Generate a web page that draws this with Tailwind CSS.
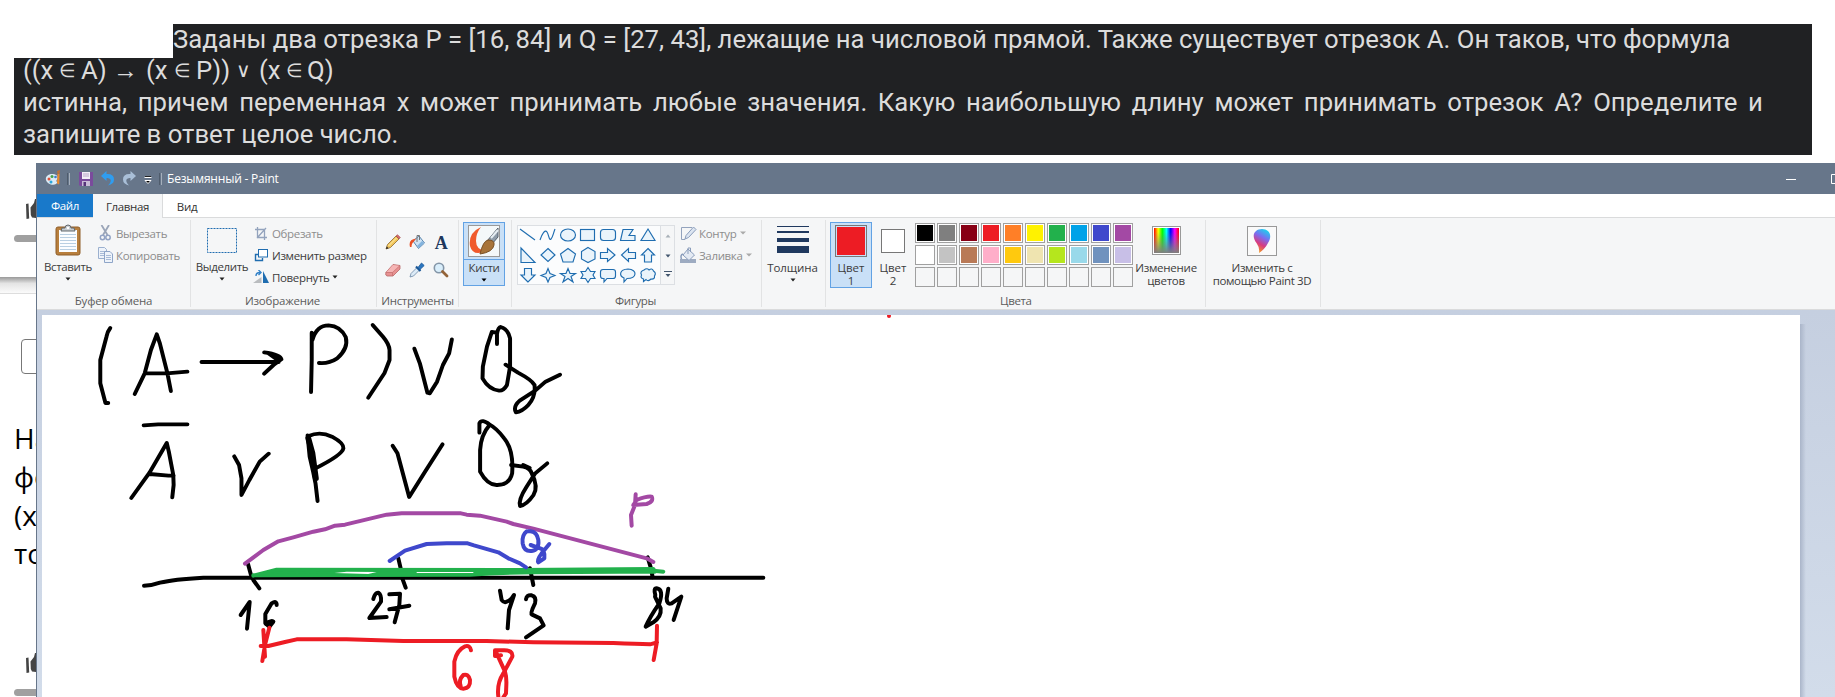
<!DOCTYPE html>
<html lang="ru">
<head>
<meta charset="utf-8">
<title>Безымянный - Paint</title>
<script src="https://cdn.jsdelivr.net/npm/@tailwindcss/browser@4"></script>
</head>
<body class="w-[1835px] h-[697px] overflow-hidden bg-white relative flex flex-col">

<!-- Task statement -->
<section class="mt-6 ml-[14px] w-[1798px] h-[131px] bg-[#202123] text-[#dcdcdc] font-['Roboto','Noto_Sans',sans-serif] text-[25.7px] leading-[31.6px] whitespace-nowrap shrink-0 relative">
  <div class="flex h-[34px]"><div class="w-[159px] h-[34px] bg-white shrink-0"></div><div class="w-[1556px] h-[32px]">Заданы два отрезка P = [16, 84] и Q = [27, 43], лежащие на числовой прямой. Также существует отрезок A. Он таков, что формула</div></div>
  <div class="ml-[9px] -mt-[3px] h-[32px] grid grid-cols-[36px_22px_32px_33px_28px_22px_40px_23px_27px_21px_auto] w-[330px]"><span>((x</span><span class="font-['DejaVu_Sans'] text-[19px]">∈</span><span>A)</span><span class="font-['Liberation_Sans'] text-[25px]">→</span><span>(x</span><span class="font-['DejaVu_Sans'] text-[19px]">∈</span><span>P))</span><span class="font-['DejaVu_Sans'] text-[20px]">∨</span><span>(x</span><span class="font-['DejaVu_Sans'] text-[19px]">∈</span><span>Q)</span></div>
  <div class="ml-[9px] w-[1740px] flex justify-between"><span>истинна,</span><span>причем</span><span>переменная</span><span>x</span><span>может</span><span>принимать</span><span>любые</span><span>значения.</span><span>Какую</span><span>наибольшую</span><span>длину</span><span>может</span><span>принимать</span><span>отрезок</span><span>A?</span><span>Определите</span><span>и</span></div>
  <div class="pl-[9px]">запишите в ответ целое число.</div>
</section>

<div class="flex mt-2 h-[534px] shrink-0">
  <!-- Page visible behind the window -->
  <aside class="w-9 h-[534px] shrink-0 overflow-hidden font-['Open_Sans','Noto_Sans',sans-serif] text-black">
    <svg class="block ml-[26px] mt-[35px]" width="10" height="22"><path d="M0 6 2.500 5.500 3.200 20.500 .500 21Z" fill="#444"/><path d="M4.500 9.500 8 5 9 1H10V20L6 19.500 4.800 17Z" fill="#444"/></svg>
    <div class="ml-[14px] mt-[15px] w-10 h-[7px] rounded-full bg-[#a0a0a0]"></div>
    <div class="mt-[35px] h-[17px] bg-linear-to-b from-[#999] via-[#e4e4e4] via-40% to-[#fbfbfb] border-b border-[#ddd]"></div>
    <div class="ml-[21px] mt-[45px] w-10 h-[35px] rounded-[4px] border border-[#777]"></div>
    <div class="ml-[14px] mt-[45px] text-[28px] leading-[38.4px] h-[153px] whitespace-nowrap"><p>На</p><p>фо</p><p>(x</p><p>то</p></div>
    <svg class="block ml-[26px] mt-[80px]" width="10" height="22"><path d="M0 6 2.500 5.500 3.200 20.500 .500 21Z" fill="#444"/><path d="M4.500 9.500 8 5 9 1H10V20L6 19.500 4.800 17Z" fill="#444"/></svg>
    <div class="ml-[14px] mt-[15px] w-10 h-[7px] rounded-full bg-[#a0a0a0]"></div>
  </aside>

  <!-- Paint window -->
  <main class="w-[1799px] h-[534px] shrink-0 overflow-hidden border-l border-[#67768a] flex flex-col font-['Open_Sans','Noto_Sans',sans-serif] text-[11.5px] leading-[13px] tracking-[-0.35px] text-[#3c3c3c] whitespace-nowrap">
    <header class="h-[31px] bg-[#67768a] flex items-center shrink-0 -ml-px pl-[9px] text-white">
      <svg width="17" height="17" viewBox="0 0 17 17"><path d="M1 10C0 6 4 3.500 8 4S14 7 12 9.500 14 12 11 14 2 14 1 10Z" fill="#dcebf5"/><circle cx="4" cy="9" r="1.500" fill="#e0523c"/><circle cx="7" cy="6.500" r="1.500" fill="#4aa34a"/><circle cx="10.500" cy="7" r="1.300" fill="#3b7bd0"/><circle cx="6" cy="12" r="1.500" fill="#28a7dd"/><path d="M12.500 4 14.500 4 14.200 14Q13 15 12 13Z" fill="#e98a2c"/><path d="M12 1 15 0 14.500 4H12.500Z" fill="#b9703a"/></svg>
      <div class="w-[3px] h-3 ml-[5px] border-l border-r border-l-[#4f5c6c] border-r-[#a5afbb]"></div>
      <svg class="ml-[9px]" width="14" height="14"><path d="M0 0H14V14H1L0 13Z" fill="#7a4b9c"/><path d="M3 0H11V7H3Z" fill="#f3eef7"/><path d="M4 2H10M4 4H10" stroke="#b8a5c8"/><path d="M3 9H11V14H3Z" fill="#c9bcd6"/><path d="M4.500 10H7V14H4.500Z" fill="#56347a"/></svg>
      <svg class="ml-[8px]" width="14" height="15"><path d="M0 5 5.500 0V3Q13 2.500 13 8.500 13 13 7 14.500 10.500 11 9.500 8.500 8.500 6.700 5.500 7V10Z" fill="#2f9df0"/></svg>
      <svg class="ml-[7px]" width="14" height="15"><path d="M14 5 8.500 0V3Q1 2.500 1 8.500 1 13 7 14.500 3.500 11 4.500 8.500 5.500 6.700 8.500 7V10Z" fill="#a9bfd8"/></svg>
      <svg class="ml-[8px] mt-[3px]" width="8" height="8"><path d="M.500 1.500H7.500M1 4.500H7L4 7.500Z" stroke="#fff" fill="#000"/><path d="M1 .5H7" stroke="#222"/></svg>
      <div class="w-[3px] h-3 ml-[7px] border-l border-r border-l-[#4f5c6c] border-r-[#a5afbb]"></div>
      <span class="ml-[5px] text-[12px] tracking-[-0.2px]">Безымянный - Paint</span>
      <svg class="ml-auto" width="50" height="12"><path d="M1 6.500H11" stroke="#fff"/><path d="M55 1.500H46.500V10.500H55" fill="none" stroke="#fff"/></svg>
    </header>

    <nav class="h-6 flex shrink-0 border-b border-[#dadbdc] text-[#333]">
      <div class="w-14 h-[23px] bg-[#1979ca] text-white flex items-center justify-center">Файл</div>
      <div class="w-[70px] h-6 bg-[#f5f6f7] border-r border-[#dadbdc] flex items-center justify-center">Главная</div>
      <div class="w-12 h-6 flex items-center justify-center">Вид</div>
    </nav>

    <div class="h-[92px] bg-[#f5f6f7] flex shrink-0 pt-[2px] border-b border-[#dadbdc]">
      <!-- Clipboard -->
      <section class="w-[154px] h-[87px] border-r border-[#e2e3e4] flex flex-col shrink-0">
        <div class="h-[74px] flex">
          <div class="w-[60px] pl-[2px] flex flex-col items-center pt-[4px]">
            <svg width="26" height="32" viewBox="0 0 26 32"><rect x="1" y="3" width="24" height="28" rx="2" fill="#b87f3d" stroke="#8f5f2a"/><path d="M4 6H22V28H4Z" fill="#fbfdff"/><path d="M5 10.500H21M5 13.500H21M5 16.500H21M5 19.500H21M5 22.500H21M5 25.500H21" stroke="#b9cfe2"/><path d="M6 7 7 4H10Q10 1 13 1T16 4H19L20 7Z" fill="#c5cbd0" stroke="#63686d"/><circle cx="13" cy="4" r="1.300" fill="#fff"/></svg>
            <span class="mt-[4px]">Вставить</span>
            <svg class="mt-[4px]" width="6" height="4"><path d="M.5.5H5.500L3 3.500Z" fill="#222"/></svg>
          </div>
          <div class="flex flex-col text-[#8d8d8d] pl-[1px]">
            <div class="flex items-center h-[22px] mt-[2px]"><svg width="15" height="16" class="mr-[3px]"><path d="M3.500 0 9.500 10M11 0 5 10" stroke="#9aa5b8" stroke-width="1.800"/><circle cx="4.500" cy="12.500" r="2.200" fill="none" stroke="#92a3c4" stroke-width="1.500"/><circle cx="10" cy="12.500" r="2.200" fill="none" stroke="#92a3c4" stroke-width="1.500"/></svg><span>Вырезать</span></div>
            <div class="flex items-center h-[22px]"><svg width="15" height="16" class="mr-[3px]"><path d="M.5.5H6.500L8.500 2.500V11.500H.5Z" fill="#eef3fa" stroke="#9bb0cf"/><path d="M2 4.500H7M2 6.500H7M2 8.500H7" stroke="#a9bcd8"/><path d="M6.500 4.500H12L14.500 7V15.500H6.500Z" fill="#eef3fa" stroke="#8ea5c8"/><path d="M8 8.500H13M8 10.500H13M8 12.500H13" stroke="#a9bcd8"/></svg><span>Копировать</span></div>
          </div>
        </div>
        <p class="text-center text-[#5c5c5c] tracking-[-0.2px]">Буфер обмена</p>
      </section>
      <!-- Image -->
      <section class="w-[186px] h-[87px] border-r border-[#e2e3e4] flex flex-col shrink-0">
        <div class="h-[74px] flex">
          <div class="w-[62px] flex flex-col items-center pt-[8px]">
            <svg width="30" height="25"><rect x=".5" y=".5" width="29" height="24" fill="none" stroke="#1f6db0" stroke-dasharray="2 1"/></svg>
            <span class="mt-[7px]">Выделить</span>
            <svg class="mt-[4px]" width="6" height="4"><path d="M.5.5H5.500L3 3.500Z" fill="#222"/></svg>
          </div>
          <div class="flex flex-col">
            <div class="flex items-center h-[22px] mt-[2px] text-[#8d8d8d]"><svg width="17" height="14" class="mr-[2px]"><path d="M4.500 1V11.500H14M2 3.500H11.500V14M4 12 13 2" fill="none" stroke="#93a3bd" stroke-width="1.300"/></svg>Обрезать</div>
            <div class="flex items-center h-[22px]"><svg width="17" height="14" class="mr-[2px]"><path d="M6 6.500H2.500V12.500H9.500V10" fill="none" stroke="#1f6db0" stroke-width="1.400"/><rect x="5.500" y="1.500" width="9" height="7.500" fill="#fff" stroke="#1f6db0"/></svg><span>Изменить размер</span></div>
            <div class="flex items-center h-[22px]"><svg width="17" height="14" class="mr-[2px]"><path d="M0 13 8.500 7V13Z" fill="#b9bcbf"/><path d="M10 1 16 13H10Z" fill="#1f6db0"/><path d="M3 6Q3 2.500 7 2.500M5.500 0 8 2.500 5.500 5" fill="none" stroke="#3181c8" stroke-width="1.400"/></svg>Повернуть<svg class="ml-[3px]" width="6" height="4"><path d="M.5.5H5.500L3 3.500Z" fill="#222"/></svg></div>
          </div>
        </div>
        <p class="text-center text-[#5c5c5c] pr-[2px] tracking-[-0.2px]">Изображение</p>
      </section>
      <!-- Tools -->
      <section class="w-[82px] h-[87px] border-r border-[#e2e3e4] flex flex-col shrink-0">
        <div class="h-[74px] grid grid-cols-[16px_16px_16px] gap-x-[8px] content-start gap-y-[12px] pl-[8px] pt-[14px]">
          <svg width="16" height="16"><path d="M1 15 2.500 10.500 11 2 14 5 5.500 13.500Z" fill="#f2c65b" stroke="#8b6a32" stroke-width=".8"/><path d="M11 2 12.500 .7 15.300 3.500 14 5Z" fill="#d86c6c" stroke="#9b4545" stroke-width=".6"/><path d="M1 15 1.800 12.500 3.500 14.200Z" fill="#222"/><path d="M3.500 12 11.500 4" stroke="#fff0b0"/></svg>
          <svg width="16" height="16"><path d="M4 7 10 2 15.500 9 9.500 14.500Z" fill="#cfe3f4" stroke="#5a86b0"/><path d="M8 8V1.500H10.500V6" fill="none" stroke="#777"/><path d="M1 13Q-1 5.500 7 4.500L5 7.500Q2.500 9 2.500 13Z" fill="#ea4f24"/><path d="M10 14 15 9 13 7 8 12Z" fill="#83b4de"/></svg>
          <svg width="16" height="16"><text x="8" y="14.500" text-anchor="middle" font-family="Liberation Serif" font-weight="700" font-size="18" fill="#20375c">A</text></svg>
          <svg width="16" height="16"><path d="M.8 10.500 8 2.500 15 3.500V7L8 14H2L.8 13Z" fill="#e89292" stroke="#b86767" stroke-width=".8"/><path d="M1 10.500H7.500L15 3.500M7.500 10.500V14" stroke="#c77474" fill="none" stroke-width=".8"/><path d="M1.500 10 8 3 14 3.800 7.500 10Z" fill="#f5b5b5"/></svg>
          <svg width="16" height="16"><path d="M1 15 2 11.500 8 5.500 10.500 8 4.500 14Z" fill="#dcebf7" stroke="#6b87a5" stroke-width=".8"/><path d="M7 4.500 11.500 9" stroke="#1b5796" stroke-width="2.200"/><path d="M9 5.500 12.500 1 15.200 3.500 11 7.500Z" fill="#2a76c0" stroke="#1b5796" stroke-width=".8"/></svg>
          <svg width="16" height="16"><circle cx="6" cy="6" r="4.700" fill="#d9eefb" stroke="#8496a8" stroke-width="1.600"/><path d="M9.500 9.500 14 14" stroke="#936338" stroke-width="2.800" stroke-linecap="round"/></svg>
        </div>
        <p class="text-center text-[#5c5c5c]">Инструменты</p>
      </section>
      <!-- Brushes -->
      <section class="w-[53px] h-[87px] border-r border-[#e2e3e4] flex flex-col shrink-0 pl-[4px] pt-[2px]">
        <div class="w-[42px] h-[64px] bg-[#c9e0f7] border border-[#62a2e4] flex flex-col items-center pt-[2px]">
          <svg width="32" height="32" class="shrink-0"><rect x=".5" y=".5" width="31" height="31" fill="#f4f8f9" stroke="#999"/><path d="M13 2Q0 8 2 21 5 32 18 26 8 25 8 16 8 8 13 2Z" fill="#f05a2c"/><path d="M19 16 30 3V12L24 19Z" fill="#8e9ca9" stroke="#58636e"/><path d="M23 13 30 5" stroke="#e6edf2" stroke-width="2"/><path d="M12 29Q15 16 20 15 27 15 26 20 25 27 12 29Z" fill="#a8743a" stroke="#7b5125"/></svg>
          <div class="w-[40px] h-px bg-[#62a2e4] mt-[2px] shrink-0"></div>
          <span class="mt-[1px]">Кисти</span>
          <svg class="mt-[4px] shrink-0" width="6" height="4"><path d="M.5.5H5.500L3 3.500Z" fill="#000"/></svg>
        </div>
      </section>
      <!-- Shapes -->
      <section class="w-[250px] h-[87px] border-r border-[#e2e3e4] flex flex-col shrink-0">
        <div class="h-[74px] flex pt-[5px] pl-[5px]">
          <div class="w-[158px] h-[60px] border border-[#dcdfe3] flex shrink-0 bg-[#fbfcfd]">
            <svg width="142" height="58" fill="#eaf4fb" stroke="#1f6db0" stroke-width="1.150" class="shrink-0">
              <path d="M2 3 17 14"/><path d="M22 14C24 8 27 3 29 6S31 15 33 13 35 8 37 3" fill="none"/><ellipse cx="50" cy="9" rx="7.500" ry="6"/><rect x="62.500" y="3.500" width="14" height="11"/><rect x="82.500" y="3.500" width="15" height="11" rx="3"/><path d="M105 3.500H115L111 9.500H117V14.500H102.500Z"/><path d="M130 3 137 14.500H123Z"/>
              <path d="M3 22V36.500H17Z"/><path d="M30 22.500 37 29 30 35.500 23 29Z"/><path d="M50 22.500 57.500 28 55 36H45L42.500 28Z"/><path d="M70 21.500 77 25.500V33L70 36.500 63.500 33V25.500Z"/><path d="M82.500 26.500H89.500V22.500L97 29 89.500 35.500V32.500H82.500Z"/><path d="M117.500 26.500H110.500V22.500L103.500 29 110.500 35.500V32.500H117.500Z"/><path d="M130 22.500 136.500 29H133.500V36H126.500V29H123.500Z"/>
              <path d="M10 56 3 49H6.500V42.500H13.500V49H17Z"/><path d="M30 42.500 32 47.500 37 49.500 32 51.500 30 56 28 51.500 23 49.500 28 47.500Z"/><path d="M50 42.500 52 47.500H57.500L53 50.500 55 56 50 52.500 45 56 47 50.500 42.500 47.500H48Z"/><path d="M70 41.500 72.500 45.500H77L75 49 77 52.500H72.500L70 56.500 67.500 52.500H63L65 49 63 45.500H67.500Z"/><path d="M85 43.500H95Q97.500 43.500 97.500 46V50Q97.500 52.500 95 52.500H89L86 56V52.500H85Q82.500 52.500 82.500 50V46Q82.500 43.500 85 43.500Z"/><path d="M109 52.500 106 56V52C101 50 101 43.500 110 43 120 43.500 119 52.500 109 52.500Z"/><path d="M126 44Q129 41.500 131 44 134 41.500 135.500 45 138.500 47 136.500 50 137 53.500 133 53 130 56 128 53.500L125.500 55.500 125.500 53Q122 52 123.500 49 121.500 45.500 126 44Z"/>
            </svg>
            <div class="w-[15px] border-l border-[#dcdfe3] flex flex-col items-center bg-[#f5f6f7]">
              <svg class="mt-[8px]" width="6" height="4"><path d="M.5 3.500H5.500L3 .5Z" fill="#a8b0b8"/></svg>
              <svg class="mt-[16px]" width="6" height="4"><path d="M.5.5H5.500L3 3.500Z" fill="#43566e"/></svg>
              <svg class="mt-[13px]" width="8" height="7"><path d="M0 .5H8" stroke="#43566e"/><path d="M1.500 3H6.500L4 6Z" fill="#43566e"/></svg>
            </div>
          </div>
          <div class="flex flex-col text-[#8d8d8d] pl-[5px] -mt-[3px]">
            <div class="flex items-center h-[22px]"><svg width="17" height="15" class="mr-[2px]"><path d="M12 1.500H1.500V13.500H5" fill="none" stroke="#93a3bd"/><path d="M5 13 6 9.500 13.500 1 16 3.500 8.500 11.500Z" fill="#dce5f1" stroke="#8a9dbb"/></svg>Контур<svg class="ml-[4px]" width="6" height="4"><path d="M0 .5H6L3 3.500Z" fill="#aaa"/></svg></div>
            <div class="flex items-center h-[22px]"><svg width="17" height="16" class="mr-[2px]"><path d="M0 12H16V16H0Z" fill="#9dabc1"/><path d="M3 8 8 2 14.500 8 9 13.500Z" fill="#e4eaf3" stroke="#8a9dbb"/><path d="M8 7V1H10.500V5" fill="none" stroke="#8a9dbb"/><path d="M3 7Q0 8 1.500 12" stroke="#8a9dbb" fill="none" stroke-width="1.500"/></svg>Заливка<svg class="ml-[4px]" width="6" height="4"><path d="M0 .5H6L3 3.500Z" fill="#aaa"/></svg></div>
          </div>
        </div>
        <p class="text-center text-[#5c5c5c] pr-[2px]">Фигуры</p>
      </section>
      <!-- Stroke size -->
      <section class="w-[64px] h-[87px] border-r border-[#e2e3e4] flex flex-col items-center shrink-0 pt-[6px] pr-[2px]">
        <div class="w-8 h-px bg-[#20395f] shrink-0"></div><div class="w-8 h-[2px] bg-[#20395f] mt-[4px] shrink-0"></div><div class="w-8 h-[4px] bg-[#20395f] mt-[5px] shrink-0"></div><div class="w-8 h-[7px] bg-[#20395f] mt-[4px] shrink-0"></div>
        <span class="mt-[8px] tracking-[-0.1px]">Толщина</span>
        <svg class="mt-[4px]" width="6" height="4"><path d="M.5.5H5.500L3 3.500Z" fill="#222"/></svg>
      </section>
      <!-- Colours -->
      <section class="w-[380px] h-[87px] border-r border-[#e2e3e4] flex flex-col shrink-0">
        <div class="h-[74px] flex">
          <div class="ml-[4px] mt-[2px] w-[42px] h-[66px] bg-[#c9e0f7] border border-[#62a2e4] flex flex-col items-center pt-[2px] text-center">
            <div class="size-8 bg-[#c9e0f7] border border-[#777] p-px shrink-0"><div class="size-full bg-[#ed1c24]"></div></div>
            <span class="mt-[4px] tracking-normal">Цвет<br>1</span>
          </div>
          <div class="w-[32px] ml-[5px] mt-[9px] flex flex-col items-center text-center">
            <div class="size-6 bg-white border border-[#777] shrink-0"></div>
            <span class="mt-[8px] tracking-normal">Цвет<br>2</span>
          </div>
          <div id="palette" class="ml-[6px] mt-[3px] grid grid-cols-[repeat(10,20px)] auto-rows-[20px] gap-[2px] content-start"></div>
          <div class="w-[66px] flex flex-col items-center text-center pt-[6px]">
            <div class="size-[29px] border border-[#999] bg-white p-[1px] shrink-0"><div class="size-full bg-[linear-gradient(to_bottom,transparent_15%,#808080),linear-gradient(to_right,#f00,#ff0,#0f0,#0ff,#00f,#f0f,#f00)]"></div></div>
            <span class="mt-[6px] tracking-[-0.25px]">Изменение<br>цветов</span>
          </div>
        </div>
        <p class="pl-[174px] text-[#5c5c5c]">Цвета</p>
      </section>
      <!-- Paint 3D -->
      <section class="w-[115px] h-[87px] border-r border-[#e2e3e4] flex flex-col items-center text-center shrink-0 pt-[6px] pr-[2px]">
        <svg width="30" height="30" class="shrink-0"><defs><linearGradient id="drop" x1=".7" y1="0" x2=".3" y2="1"><stop offset="0" stop-color="#18d5ee"/><stop offset=".35" stop-color="#7b6cf0"/><stop offset=".65" stop-color="#d83b80"/><stop offset="1" stop-color="#f6a51a"/></linearGradient></defs><rect x=".5" y=".5" width="29" height="29" fill="#fafafa" stroke="#999"/><path d="M12 27Q13 22 9.500 17C3.500 9 8 3 15 3S26 9 21 17Q18 23 12 27Z" fill="url(#drop)"/></svg>
        <span class="mt-[5px]">Изменить с<br>помощью Paint 3D</span>
      </section>
    </div>

    <!-- Work area -->
    <div class="flex-1 bg-linear-to-b from-[#c5cfe0] to-[#d2dcea] pt-[5px] pl-[5px] flex">
      <svg class="bg-white shrink-0" width="1758" height="382" viewBox="42 315 1758 382" fill="none" stroke="#000" stroke-width="4" stroke-linecap="round" stroke-linejoin="round">
        <g transform="translate(60 310) scale(.34435 .33333)">
          <g stroke-width="11.500">
            <path d="M146 54Q138 64 135 80L117 150V220L132 279H140"/><path d="M217 252 246 190 264 120 281 73 290 100 312 190 322 243M246 190H310L370 185"/>
            <path d="M411 156H635M593 127Q640 133 643 148L620 165 593 191M605 130 632 150"/>
            <path d="M731 68V150L729 246M733 90Q745 46 780 46 815 48 830 82 838 115 805 145 780 162 752 159"/>
            <path d="M908 45 938 80Q956 102 957 120V150L942 190 895 263"/>
            <path d="M1029 116 1045 160 1067 248 1074 250 1095 215 1112 165 1130 130 1138 88"/>
            <path d="M1269 102V72Q1272 52 1280 51 1300 56 1307 85V170L1298 225Q1288 243 1275 242 1245 238 1227 205L1228 170 1240 110 1254 66 1268 68"/>
            <path d="M1294 164 1330 188Q1370 210 1378 225 1382 260 1360 285 1342 305 1324 307 1315 290 1335 272L1380 242 1410 215 1452 194"/>
            <path d="M243 346 285 343H370"/><path d="M207 564 260 488 310 399 316 425 329 495 330 525 326 562M260 492 315 497H330"/>
            <path d="M506 439 520 465 527 505V555L550 510 580 455 606 431"/>
            <path d="M719 376 725 440 735 485 742 520 748 573"/><path d="M722 378Q755 363 790 380 825 400 823 415 820 435 742 475"/><path stroke-width="17" d="M721 385 733 430 743 505"/>
            <path d="M966 407 980 430 1014 561 1060 485 1111 403"/>
            <path d="M1218 368V340Q1225 325 1248 344 1222 375 1220 420V485Q1242 527 1270 525 1305 525 1313 490 1318 420 1290 385 1268 355 1248 344"/>
            <path d="M1310 465 1345 470Q1365 474 1370 490 1390 530 1375 555 1355 585 1336 588 1330 570 1355 530L1380 490 1415 460M1345 465 1364 474"/>
          </g>
        </g>
        <g transform="translate(120 480) scale(.33333)" stroke-width="12">
          <path d="M72 317Q95 317 120 308 160 298 250 293H1930"/>
          <path d="M384 252 393 285 400 300 418 325M835 235 842 265 848 298 857 323"/>
          <path d="M362 405 389 366 381 446"/><path d="M470 375Q470 360 455 370L436 402V430L448 440 460 425"/><path stroke-width="16" d="M440 430 455 425"/>
          <path d="M760 357Q765 337 775 338 785 345 783 365L748 414 800 411M808 343 840 341 838 375 824 427M808 388 868 377"/>
          <path d="M1230 265 1240 315M1583 232 1593 265 1598 292"/>
          <path d="M1140 332 1145 360Q1155 375 1175 355L1182 345 1167 390 1163 445"/><path d="M1218 358Q1220 343 1235 346 1250 350 1245 370 1230 400 1235 403L1260 415 1271 436 1218 472"/>
          <path d="M1606 345Q1600 325 1610 325 1632 328 1618 370 1590 410 1577 440L1600 427Q1625 410 1622 385L1605 350M1645 326 1640 355Q1640 375 1655 370L1684 350 1661 420"/>
          <path stroke="#22b14c" fill="#22b14c" d="M400 287 470 269 1200 270 1600 267 1605 275 1500 275 1240 277Q1140 278 1050 284L400 286Z"/><path stroke="#22b14c" d="M1600 272 1630 275"/><path stroke="none" fill="#fff" d="M643 279 680 275 770 276 745 282ZM890 276H1060V279H890Z"/>
          <path stroke="#a349a4" d="M375 251 430 210 475 184 520 172 580 155 615 148 645 137 675 134 800 104 845 100H1023L1040 104 1080 107 1160 125 1180 132 1240 146 1320 167 1580 235 1600 246"/>
          <path stroke="#3f48cc" d="M809 243 855 212 920 192 980 190H1043L1062 196 1135 217 1165 235 1200 250 1218 262"/>
          <path stroke="#3f48cc" d="M1220 154Q1205 165 1208 190 1212 215 1235 213 1258 210 1255 180 1250 150 1225 154M1232 195 1260 205Q1275 208 1273 235L1255 247Q1250 240 1265 220L1288 192"/>
          <path stroke="#a349a4" d="M1547 43 1545 75 1533 105 1535 137M1540 75 1550 60Q1580 48 1595 50 1602 65 1580 72L1540 75"/>
          <path stroke="#ed1c24" d="M430 450 435 530M448 443 435 495 427 543M422 498H445L495 486 530 478H680L850 483 1100 483 1240 487 1480 489Q1550 492 1590 493L1611 487M1611 437 1610 490 1601 540"/>
          <path stroke="#ed1c24" d="M1053 511Q1050 495 1035 499 1010 510 1003 545V590Q1010 625 1030 626 1052 625 1050 600 1045 580 1030 585 1015 600 1022 618"/>
          <path stroke="#ed1c24" d="M1143 526 1125 528V511H1150Q1180 510 1177 530L1150 580Q1130 610 1135 650M1130 520 1155 575Q1160 590 1159 615L1158 640 1150 652"/>
        </g>
        <circle cx="889" cy="316" r="2" fill="#ed1c24" stroke="none"/>
      </svg>
      <div class="w-[6px] mt-[9px] bg-linear-to-r from-[#aab5c9] to-[#aab5c9]/0"></div>
    </div>
  </main>
</div>

<script>
  const colours = ['#000','#7f7f7f','#880015','#ed1c24','#ff7f27','#fff200','#22b14c','#00a2e8','#3f48cc','#a349a4','#fff','#c3c3c3','#b97a57','#ffaec9','#ffc90e','#efe4b0','#b5e61d','#99d9ea','#7092be','#c8bfe7'];
  let cells = '';
  for (let i = 0; i < 30; i++) {
    cells += colours[i]
      ? `<div class="size-5 border border-[#a0a0a0] bg-white p-px"><div class="size-full" style="background:${colours[i]}"></div></div>`
      : '<div class="size-5 border border-[#a0a0a0]"></div>';
  }
  document.getElementById('palette').innerHTML = cells;
</script>
</body>
</html>
